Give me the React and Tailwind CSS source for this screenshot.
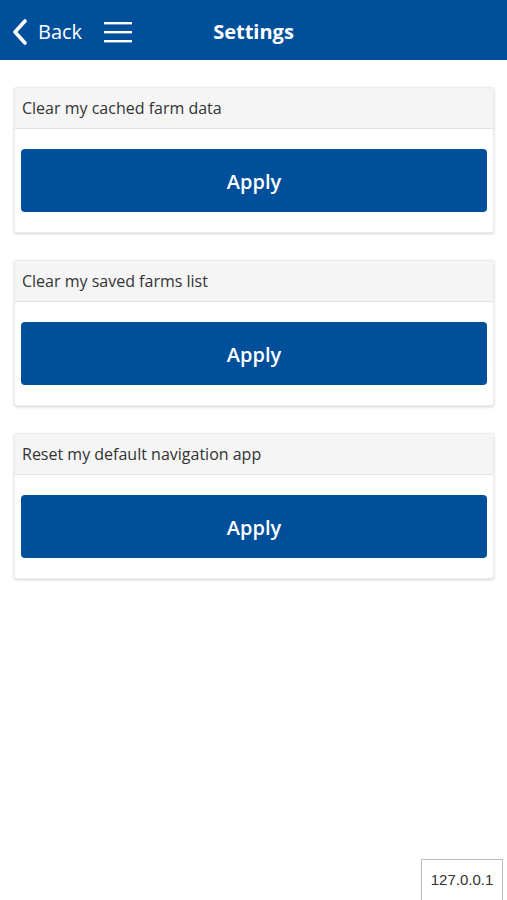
// App.jsx — Settings screen with cache reset actions

const actions = [
  "Clear my cached farm data",
  "Clear my saved farms list",
  "Reset my default navigation app",
];

const SettingCard = ({ label }) => (
  <div className="rounded-[3px] border border-[#ececec] bg-white shadow-[0_1px_3px_rgba(0,0,0,0.18)]">
    <div className="h-[41px] flex items-center px-[7px] bg-[#f5f5f5] border-b border-[#e3e3e3] rounded-t-[3px] text-[16px] text-[#333]">
      {label}
    </div>
    <div className="px-[6px] pt-[20px] pb-[20px]">
      <button className="w-full h-[63px] rounded-[4px] bg-[#004f9b] text-white text-[20px] font-semibold flex items-center justify-center pt-[3px]">
        Apply
      </button>
    </div>
  </div>
);

const App = () => {
  return (
    <div className="relative w-[507px] h-[900px] bg-white overflow-hidden font-['Open_Sans',sans-serif]">
      {/* Top bar */}
      <div className="relative h-[60px] bg-[#004f9b] flex items-center text-white pt-[3px]">
        <div className="flex items-center pl-[11px]">
          <svg width="18" height="26" viewBox="0 0 18 26" fill="none">
            <path d="M14 2 L4 13 L14 24" stroke="white" strokeWidth="3.6" strokeLinecap="round" strokeLinejoin="round" />
          </svg>
          <span className="ml-[9px] text-[20px] leading-none">Back</span>
          <svg className="ml-[22px]" width="28" height="22" viewBox="0 0 28 22">
            <rect x="0" y="1" width="28" height="2.4" fill="white" />
            <rect x="0" y="10" width="28" height="2.4" fill="white" />
            <rect x="0" y="19" width="28" height="2.4" fill="white" />
          </svg>
        </div>
        <div className="absolute inset-0 pt-[3px] flex items-center justify-center pointer-events-none">
          <span className="text-[20px] font-bold">Settings</span>
        </div>
      </div>

      {/* Actions */}
      <div className="pl-[14px] pr-[13px] pt-[27px] flex flex-col gap-[27px]">
        {actions.map((label) => (
          <SettingCard key={label} label={label} />
        ))}
      </div>

      {/* Host label */}
      <div className="absolute right-[4px] bottom-[-2px] h-[43px] w-[82px] border border-[#bdbdbd] bg-white flex items-center justify-center text-[15px] text-[#333] font-['Liberation_Sans',sans-serif]">
        127.0.0.1
      </div>
    </div>
  );
};

export default App;
